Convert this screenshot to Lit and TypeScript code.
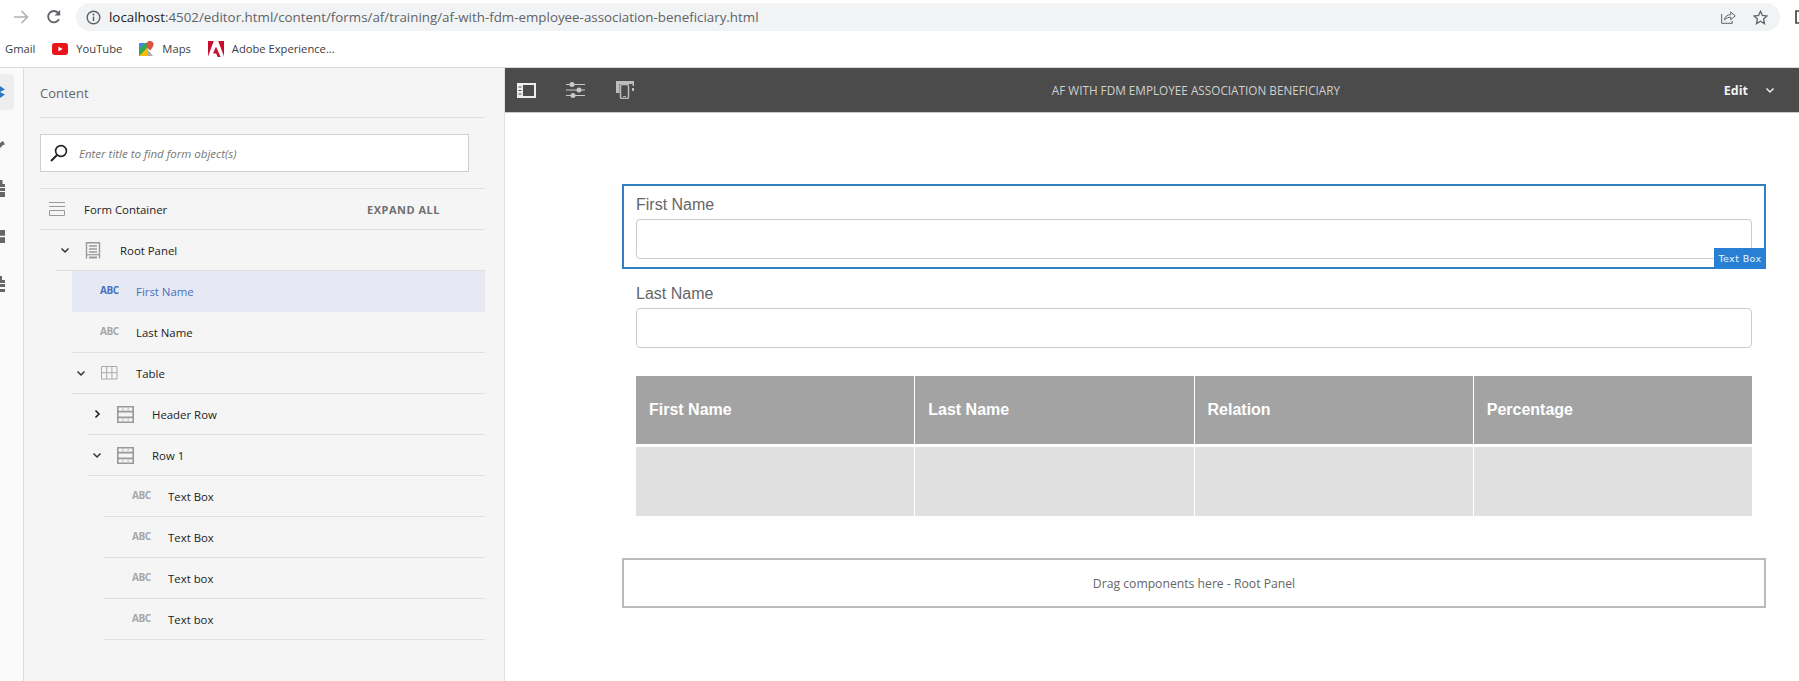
import { LitElement, html, css, svg } from "lit";
import { customElement } from "lit/decorators.js";

type Row = { indent: number; label: string; icon: "panel" | "abc" | "table" | "row"; chevron?: "down" | "right"; selected?: boolean };

const rows: Row[] = [
  { indent: 56, label: "Root Panel", icon: "panel", chevron: "down" },
  { indent: 72, label: "First Name", icon: "abc", selected: true },
  { indent: 72, label: "Last Name", icon: "abc" },
  { indent: 72, label: "Table", icon: "table", chevron: "down" },
  { indent: 88, label: "Header Row", icon: "row", chevron: "right" },
  { indent: 88, label: "Row 1", icon: "row", chevron: "down" },
  { indent: 104, label: "Text Box", icon: "abc" },
  { indent: 104, label: "Text Box", icon: "abc" },
  { indent: 104, label: "Text box", icon: "abc" },
  { indent: 104, label: "Text box", icon: "abc" },
];

const chevDown = svg`<path d="M1.5 3.5 5 7l3.5-3.5" fill="none" stroke="#333" stroke-width="1.5"/>`;
const chevRight = svg`<path d="M3.5 1.5 7 5 3.5 8.5" fill="none" stroke="#222" stroke-width="1.6"/>`;

const treeIcons = {
  panel: html`<svg class="ico" width="16" height="17" viewBox="0 0 16 17"><path d="M1.5 16.500V.8h13v15.700" fill="none" stroke="#999" stroke-width="1.400"/><path d="M4 4h8M4 7h8M4 10h8" stroke="#999" stroke-width="1.500"/><path d="M1 12.700h14" stroke="#999" stroke-width="1.200"/><path d="M4 15.500h8" stroke="#999" stroke-width="2"/></svg>`,
  table: html`<svg class="ico" width="17" height="14" viewBox="0 0 17 14"><path d="M.5.5h15.500v12.500H.5zM.5 6.700h15.500M5.700.5v12.500M10.900.5v12.500" fill="none" stroke="#aaa" stroke-width="1"/></svg>`,
  row: html`<svg class="ico" width="17" height="17" viewBox="0 0 17 17"><path d="M.8.8h15.400v15.400H.8z" fill="none" stroke="#999" stroke-width="1.600"/><path d="M.8 5.600h15.400M.8 11.400h15.400" stroke="#999" stroke-width="1.600"/><path d="M5.900.8v4.800M11.100.8v4.800M5.900 11.400v4.800M11.100 11.400v4.800" stroke="#bbb" stroke-width="1"/></svg>`,
};

@customElement("app-root")
export class AppRoot extends LitElement {
  static styles = css`
    :host { display: flex; flex-direction: column; height: 100vh; overflow: hidden; background: #fff; font-family: "Open Sans", "Noto Sans", sans-serif; }
    svg { display: block; flex: none; }

    .chrome { height: 67px; flex: none; border-bottom: 1px solid #dcdcdc; display: flex; flex-direction: column; }
    .navbar { height: 34px; display: flex; align-items: flex-start; padding-top: 3px; box-sizing: border-box; }
    .nav { display: flex; align-items: center; height: 28px; flex: none; }
    .back { margin-left: 14px; }
    .reload { margin-left: 17px; margin-right: 14px; }
    .pill { flex: none; width: 1704px; height: 28px; border-radius: 14px; background: #f1f3f4; display: flex; align-items: center; padding: 0 12px 0 10px; box-sizing: border-box; }
    .info { margin-right: 8px; }
    .url { font-size: 13.350px; color: #5f6368; flex: 1; white-space: nowrap; }
    .url b { font-weight: 400; color: #202124; }
    .share { margin-right: 17px; }
    .tab-edge { flex: none; margin-left: 15px; }
    .bookmarks { height: 33px; display: flex; align-items: center; font-size: 11.200px; color: #3c4043; padding: 0 0 4px 5px; box-sizing: border-box; white-space: nowrap; }
    .bm { display: flex; align-items: center; gap: 8px; margin-right: 17px; }

    .main { flex: 1; display: flex; min-height: 0; }
    .rail { width: 23px; flex: none; background: #fafafa; border-right: 1px solid #ddd; display: flex; flex-direction: column; overflow: hidden; }
    .rail-item { height: 48px; flex: none; display: flex; align-items: center; }
    .rail-active { background: #eeeeee; width: 14px; height: 36px; border-radius: 0 4px 4px 0; display: flex; align-items: center; }

    .panel { width: 481px; flex: none; box-sizing: border-box; background: #f5f5f5; border-right: 1px solid #e2e2e2; padding: 0 19px 0 16px; }
    .panel-head { height: 50px; box-sizing: border-box; border-bottom: 1px solid #e0e0e0; display: flex; align-items: center; font-size: 13px; color: #666; }
    .searchwrap { padding: 16px 0 16px; border-bottom: 1px solid #e0e0e0; }
    .search { width: 429px; height: 38px; box-sizing: border-box; background: #fff; border: 1px solid #cfcfcf; display: flex; align-items: center; padding-left: 9px; gap: 11px; font-size: 11.500px; font-style: italic; color: #777; }
    .fc { height: 41px; box-sizing: border-box; border-bottom: 1px solid #e0e0e0; display: flex; align-items: center; padding-left: 9px; font-size: 11.400px; color: #222; }
    .fc-label { margin-left: 19px; flex: 1; }
    .expand { font-size: 11px; font-weight: 700; color: #707070; letter-spacing: 0.5px; margin-right: 45px; }
    .row { height: 41px; box-sizing: border-box; border-bottom: 1px solid #e0e0e0; display: flex; align-items: center; font-size: 11.400px; color: #222; }
    .row.selected { background: #e6e9f3; color: #4a6fc0; border-bottom-color: #e6e9f3; }
    .chev { width: 18px; display: flex; justify-content: center; flex: none; }
    .iconcell { width: 35px; margin-left: 11px; flex: none; display: flex; align-items: center; }
    .abc { font-size: 10px; font-weight: 700; letter-spacing: -0.4px; color: #a6a6a6; margin-top: -2px; margin-left: -1px; }
    .selected .abc { color: #4a6fc0; }

    .editor { flex: 1; min-width: 0; display: flex; flex-direction: column; }
    .toolbar { height: 45px; flex: none; box-sizing: border-box; background: #4b4b4b; border-bottom: 1px solid #c8c8c8; display: flex; align-items: center; padding-left: 12px; }
    .tools { display: flex; align-items: center; gap: 30px; }
    .device { margin-left: 1px; }
    .title { flex: 1; text-align: center; font-size: 11.750px; color: #d0d0d0; padding-left: 34px; white-space: nowrap; }
    .edit { font-size: 12.500px; font-weight: 700; color: #f2f2f2; margin-right: 17px; }
    .editchev { margin-right: 24px; }

    .canvas { flex: 1; background: #fff; padding: 71px 33px 0 117px; font-family: "Liberation Sans", Arial, sans-serif; }
    .selbox { position: relative; height: 85px; box-sizing: border-box; border: 2px solid #2f7fc1; padding: 9px 12px 0; }
    .badge { position: absolute; right: -2px; bottom: -2px; width: 52px; height: 21px; background: #2880d4; color: #e8f4ff; font-family: "DejaVu Sans", sans-serif; font-size: 9.500px; letter-spacing: 0.4px; display: flex; align-items: center; justify-content: center; box-sizing: border-box; }
    .lbl { font-size: 16px; line-height: 20px; color: #666; margin-bottom: 4px; }
    .input { height: 40px; box-sizing: border-box; border: 1px solid #ccc; border-radius: 4px; background: #fff; }
    .field2 { margin: 15px 14px 0; }
    .grid { margin: 28px 14px 0; display: grid; grid-template-columns: repeat(4, 1fr); column-gap: 1px; row-gap: 3px; grid-template-rows: 68px 69px; }
    .th { background: #a3a3a3; color: #fff; font-weight: 700; font-size: 16px; display: flex; align-items: center; padding-left: 13px; }
    .td { background: #e0e0e0; }
    .drop { margin-top: 42px; height: 50px; box-sizing: border-box; border: 2px solid #bbb; display: flex; align-items: center; justify-content: center; font-family: "Open Sans", sans-serif; font-size: 12.200px; color: #666; }
  `;

  private tree(r: Row) {
    const chev = r.chevron
      ? html`<svg width="10" height="10" viewBox="0 0 10 10">${r.chevron === "down" ? chevDown : chevRight}</svg>`
      : "";
    return html`<div class="row ${r.selected ? "selected" : ""}" style="margin-left:${r.indent - 40}px">
      <span class="chev">${chev}</span>
      <span class="iconcell">${r.icon === "abc" ? html`<span class="abc">ABC</span>` : treeIcons[r.icon]}</span>
      <span>${r.label}</span>
    </div>`;
  }

  render() {
    return html`
      <div class="chrome">
        <div class="navbar">
          <span class="nav back"><svg width="15" height="14" viewBox="0 0 15 14"><path d="M0 7h13M7.500 1l6 6-6 6" fill="none" stroke="#b0b0b0" stroke-width="1.600"/></svg></span>
          <span class="nav reload"><svg width="16" height="16" viewBox="0 0 16 16"><path d="M13 10.200A5.700 5.700 0 1 1 12.200 4" fill="none" stroke="#5f6368" stroke-width="1.800"/><path d="M14.200.8v5.600H8.600z" fill="#5f6368"/></svg></span>
          <div class="pill">
            <svg class="info" width="15" height="15" viewBox="0 0 15 15"><circle cx="7.500" cy="7.500" r="6.300" fill="none" stroke="#5f6368" stroke-width="1.400"/><path d="M7.500 6.600v4.400" stroke="#5f6368" stroke-width="1.500"/><circle cx="7.500" cy="4.500" r="1" fill="#5f6368"/></svg>
            <span class="url"><b>localhost</b>:4502/editor.html/content/forms/af/training/af-with-fdm-employee-association-beneficiary.html</span>
            <svg class="share" width="15" height="14" viewBox="0 0 15 14"><path d="M.7 4v9.300h10.500V11" fill="none" stroke="#5f6368" stroke-width="1"/><path d="M3.500 10c.3-3.600 3-5.300 6.300-5.300V2l4.400 3.900-4.400 3.800V7.200c-2.600 0-4.600.8-6.300 2.800z" fill="none" stroke="#5f6368" stroke-width="1"/></svg>
            <svg width="15" height="15" viewBox="0 0 15 15"><path d="M7.500 1.300l1.900 4.200 4.600.5-3.400 3.100.9 4.500-4-2.300-4 2.300.9-4.500L1 6l4.600-.5z" fill="none" stroke="#5f6368" stroke-width="1.300"/></svg>
          </div>
          <span class="nav tab-edge"><svg width="5" height="14" viewBox="0 0 5 14"><path d="M5 1H1v12h4" fill="none" stroke="#444" stroke-width="1.700"/></svg></span>
        </div>
        <div class="bookmarks">
          <span class="bm">Gmail</span>
          <span class="bm"><svg width="16" height="12" viewBox="0 0 16 12"><rect width="16" height="12" rx="3" fill="#e8141a"/><path d="M6.400 3.400v5.200L10.600 6z" fill="#fff"/></svg>YouTube</span>
          <span class="bm"><svg width="15" height="16" viewBox="0 0 15 16"><path d="M0 2h9v13H0z" fill="#34a853"/><path d="M0 2h6L0 8z" fill="#4285f4"/><path d="M0 15l9-9v9z" fill="#fbbc04"/><path d="M9 15V9l5 6z" fill="#aaa"/><path d="M11 0a3.500 3.500 0 0 1 3.500 3.500C14.500 6 11 9.500 11 9.500S7.500 6 7.500 3.500A3.500 3.500 0 0 1 11 0z" fill="#e0503f"/></svg>Maps</span>
          <span class="bm"><svg width="16" height="16" viewBox="0 0 16 16"><path d="M0 0h5.800L0 15.500zM10.200 0H16v15.500z" fill="#c8102e"/><path d="M8 5.500l4.600 10.500h-3l-1.400-3.400H5z" fill="#c8102e"/></svg>Adobe Experience...</span>
        </div>
      </div>
      <div class="main">
        <div class="rail">
          <div class="rail-item"><div class="rail-active"><svg width="5" height="12" viewBox="0 0 5 12"><path d="M0 0l5 3.500L0 6zM0 6l5 2.500L0 12z" fill="#2f78c8"/></svg></div></div>
          <div class="rail-item"><svg width="5" height="16" viewBox="0 0 5 16"><path d="M0 11l3-2 2 3.500-2 .5-3 3z" fill="#666"/></svg></div>
          <div class="rail-item"><svg width="5" height="17" viewBox="0 0 5 17"><path d="M0 0h2.500v4H5v13H0z" fill="#666"/><path d="M0 7.500h5M0 11.500h5" stroke="#fafafa"/></svg></div>
          <div class="rail-item"><svg width="5" height="13" viewBox="0 0 5 13"><path d="M0 0h5v13H0z" fill="#666"/><path d="M0 6.500h5" stroke="#fafafa" stroke-width="1.500"/></svg></div>
          <div class="rail-item"><svg width="5" height="17" viewBox="0 0 5 17"><path d="M0 0h2v4h3v3H0zM0 8h5v3H0zM0 13h5v3H0z" fill="#666"/></svg></div>
        </div>
        <div class="panel">
          <div class="panel-head">Content</div>
          <div class="searchwrap">
            <div class="search">
              <svg width="18" height="18" viewBox="0 0 18 18"><circle cx="11" cy="7" r="5.400" fill="none" stroke="#222" stroke-width="1.600"/><path d="M7 11 1 17" stroke="#222" stroke-width="2"/></svg>
              <span>Enter title to find form object(s)</span>
            </div>
          </div>
          <div class="fc">
            <svg width="16" height="14" viewBox="0 0 16 14"><path d="M0 .5h16M0 4.500h16" stroke="#999" stroke-width="1"/><path d="M.5 8.500h15v5H.5z" fill="none" stroke="#999" stroke-width="1"/></svg>
            <span class="fc-label">Form Container</span>
            <span class="expand">EXPAND ALL</span>
          </div>
          ${rows.map((r) => this.tree(r))}
        </div>
        <div class="editor">
          <div class="toolbar">
            <div class="tools">
              <svg width="19" height="15" viewBox="0 0 19 15"><path d="M0 0h19v15H0z" fill="#eee"/><path d="M6 2h11v11H6z" fill="#4b4b4b"/><path d="M1.500 4h3M1.500 7.500h3M1.500 11h3" stroke="#4b4b4b" stroke-width="1"/></svg>
              <svg width="19" height="16" viewBox="0 0 19 16"><path d="M0 2.500h19M0 8h19M0 13.500h19" stroke="#c9c9c9" stroke-width="1"/><circle cx="6" cy="2.500" r="2.500" fill="#c9c9c9"/><circle cx="13" cy="8" r="2.500" fill="#c9c9c9"/><circle cx="7" cy="13.500" r="2.500" fill="#c9c9c9"/></svg>
              <svg class="device" width="18" height="18" viewBox="0 0 18 18"><path d="M0 0h18v5h-1.500V3h-13v9H0z" fill="#bdbdbd"/><path d="M16 7h2v3h-2z" fill="#bdbdbd"/><rect x="4.500" y="3.500" width="8" height="14" rx="1.500" fill="#4b4b4b" stroke="#bdbdbd" stroke-width="1.500"/><path d="M7 15.500h3" stroke="#bdbdbd" stroke-width="1"/></svg>
            </div>
            <div class="title">AF WITH FDM EMPLOYEE ASSOCIATION BENEFICIARY</div>
            <span class="edit">Edit</span>
            <svg class="editchev" width="10" height="10" viewBox="0 0 10 10"><path d="M1.500 3.500 5 7l3.500-3.500" fill="none" stroke="#eee" stroke-width="1.500"/></svg>
          </div>
          <div class="canvas">
            <div class="selbox">
              <div class="lbl">First Name</div>
              <div class="input"></div>
              <div class="badge">Text Box</div>
            </div>
            <div class="field2">
              <div class="lbl">Last Name</div>
              <div class="input"></div>
            </div>
            <div class="grid">
              <div class="th">First Name</div>
              <div class="th">Last Name</div>
              <div class="th">Relation</div>
              <div class="th">Percentage</div>
              <div class="td"></div><div class="td"></div><div class="td"></div><div class="td"></div>
            </div>
            <div class="drop">Drag components here - Root Panel</div>
          </div>
        </div>
      </div>
    `;
  }
}
